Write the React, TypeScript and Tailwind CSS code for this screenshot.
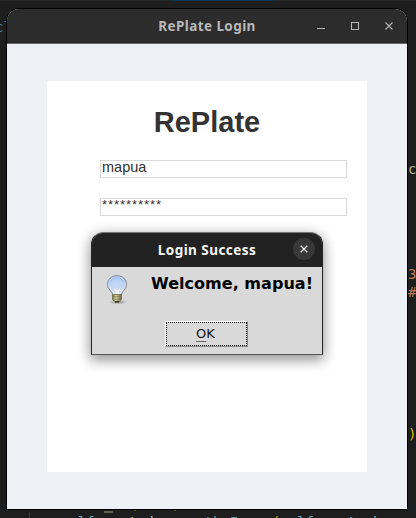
import React from "react";

function CodeBackdrop() {
  return (
    <div className="absolute inset-0 flex flex-col justify-between overflow-hidden whitespace-pre font-['DejaVu_Sans_Mono',monospace] text-[14px] leading-[18px]">
      <div className="flex h-px shrink-0 bg-[#292929] pl-[172px]">
        <div className="w-[101px] bg-[#073956]" />
      </div>
      <div className="flex grow justify-between">
        <div className="-ml-[5px] pt-[17px] text-[#4384b5]">cl</div>
        <div className="flex w-2 flex-col">
          <span className="mt-[159px] text-[#b7b792]">c</span>
          <span className="mt-[87px] text-[#b87958]">3</span>
          <span className="text-[#b87958]">#</span>
          <span className="mt-[124px] text-[#d4bd00]">)</span>
        </div>
      </div>
      <div className="flex h-[5px] shrink-0 pl-[29px]">
        <div className="w-px bg-[#404040]" />
        <div className="pl-[31px] leading-[18px]">
          <span className="text-[#6aa9ca]">self</span>
          <span className="text-[#a4c5d5]">.root_done = </span>
          <span className="text-[#4ba092]">tk.Frame</span>
          <span className="text-[#d4a500]">(</span>
          <span className="text-[#6aa9ca]">self</span>
          <span className="text-[#85b7c5]">.root, bg</span>
        </div>
      </div>
      <div className="absolute left-[104px] top-[511px] h-[2px] w-[9px] bg-[#62624a]" />
      <div className="absolute left-[134px] top-[509px] flex gap-[38px]">
        <i className="size-[2px] bg-[#665713]" />
        <i className="size-[2px] bg-[#665713]" />
      </div>
    </div>
  );
}

function WindowControls() {
  return (
    <svg className="absolute right-0 top-0" width="100" height="34" fill="none" stroke="#b5b5b5" strokeWidth="1.1" aria-hidden="true">
      <path d="M10 19.5h8" />
      <path d="M44.5 13.5h7v7h-7z" />
      <path d="m78.5 13.5 7 7m0-7-7 7" />
    </svg>
  );
}

function InfoBulb() {
  return (
    <svg width="26" height="32" viewBox="0 0 26 32" aria-hidden="true">
      <defs>
        <linearGradient id="glass" x1="0" y1="0" x2="0" y2="1">
          <stop offset="0" stopColor="#84adea" />
          <stop offset=".5" stopColor="#bfd3f2" />
          <stop offset="1" stopColor="#e8e8e6" />
        </linearGradient>
        <linearGradient id="brass" x1="0" x2="1">
          <stop offset="0" stopColor="#77713d" />
          <stop offset=".4" stopColor="#d8d4a4" />
          <stop offset="1" stopColor="#5e5a35" />
        </linearGradient>
        <radialGradient id="ground">
          <stop offset="0" stopColor="#555" stopOpacity=".65" />
          <stop offset="1" stopColor="#777" stopOpacity="0" />
        </radialGradient>
      </defs>
      <ellipse cx="14" cy="28" rx="10" ry="2.5" fill="url(#ground)" />
      <path d="M13 1.7c-5.7 0-9.5 3.7-9.500 8.700 0 5.200 4.500 6.300 5.500 11h8c1-4.700 5.500-5.800 5.500-11 0-5-3.800-8.700-9.500-8.700Z" fill="url(#glass)" stroke="#85868b" />
      <path d="M13 2.900c-5 0-8.200 3.200-8.200 7.500 0 4.400 4.300 5.600 5.300 10h5.800c1-4.400 5.300-5.600 5.300-10 0-4.300-3.200-7.500-8.200-7.500Z" fill="none" stroke="#dce9fc" strokeWidth=".8" />
      <ellipse cx="13" cy="9" rx="6" ry="4.5" fill="#c5daf8" opacity=".7" />
      <path d="m10 15 2 1.500 1-1 1 1 2-1.500M12 16v5m2-5v5" fill="none" stroke="#fff" strokeWidth=".8" />
      <path d="M8.500 20.500h9v5l-2.500 2.500h-4l-2.500-2.500Z" fill="url(#brass)" stroke="#66623d" strokeWidth=".7" />
      <path d="m8.500 23 9-.7m-8.500 3.500 8-.8" stroke="#807b4d" strokeWidth=".7" />
      <path d="M11 27h4v1.500h-4z" fill="#38382f" />
    </svg>
  );
}

function SuccessDialog() {
  return (
    <section className="absolute left-[91px] top-[232px] h-[123px] w-[232px] rounded-t-[12px] shadow-[0_4px_13px_1px_rgba(0,0,0,.43)]">
      <div className="flex h-full flex-col overflow-hidden rounded-t-[12px] border border-t-[#777] border-x-[#242424] border-b-[#555] bg-[#d9d9d9]">
        <header className="relative flex h-[34px] shrink-0 items-center justify-center bg-[#222]">
          <h2 className="whitespace-nowrap font-['Noto_Sans',sans-serif] text-[13.5px] font-bold leading-[18px] tracking-[0.45px] text-[#f5f5f5]">Login Success</h2>
          <button aria-label="Close" className="absolute right-[7px] top-[5px] flex size-[22px] items-center justify-center rounded-full bg-[#383838]">
            <svg width="8" height="8" fill="none" stroke="#eee" strokeWidth="1.3"><path d="m.7.7 6.6 6.6m0-6.6L.7 7.3" /></svg>
          </button>
        </header>
        <div className="flex h-[54px] pl-[12px] pt-[7px]">
          <InfoBulb />
          <p className="ml-[21px] h-5 origin-left scale-x-[1.07] whitespace-nowrap font-['DejaVu_Sans',sans-serif] text-[15px] font-bold leading-[20px] text-black">Welcome, mapua!</p>
        </div>
        <button className="ml-[73px] h-[26px] w-[83px] border border-t-white border-l-white border-b-[#888] border-r-[#888]">
          <span className="flex h-full items-center justify-center border border-dotted border-black pb-px pr-[2px] font-['DejaVu_Sans',sans-serif] text-[13px] leading-[18px] text-[#111]"><span className="underline decoration-[#666] underline-offset-[3px]">O</span>K</span>
        </button>
      </div>
    </section>
  );
}

export default function App() {
  return (
    <div className="relative flex h-[518px] w-[416px] justify-center overflow-hidden bg-[#1e1e1e] pr-[2px] pt-[9px]">
      <CodeBackdrop />
      <main className="relative flex h-[500px] w-[400px] flex-col items-center overflow-hidden rounded-t-[12px] bg-[#eff0f5] ring-1 ring-black">
        <header className="relative flex h-[35px] w-full shrink-0 items-center justify-center border-b border-b-[#656565] bg-[#2c2c2c]">
          <h1 className="whitespace-nowrap font-['Noto_Sans',sans-serif] text-[13.5px] font-bold leading-[18px] tracking-[0.42px] text-[#b8b8b8]">RePlate Login</h1>
          <WindowControls />
        </header>
        <div className="mt-[37px] flex h-[391px] w-[320px] flex-col bg-white pl-[53px] pr-[20px] pt-[24px] font-['Liberation_Sans',sans-serif] text-[#333]">
          <h2 className="-ml-[33px] text-center text-[29px] font-bold leading-[34px]">RePlate</h2>
          <div className="mt-[21px] h-[18px] border border-[#d9d9d9] pl-px text-[14.5px] leading-[13px]">mapua</div>
          <div className="mt-[20px] h-[18px] border border-[#d9d9d9] pl-px text-[13px] leading-[11px] tracking-[0.94px]">**********</div>
        </div>
      </main>
      <SuccessDialog />
    </div>
  );
}
